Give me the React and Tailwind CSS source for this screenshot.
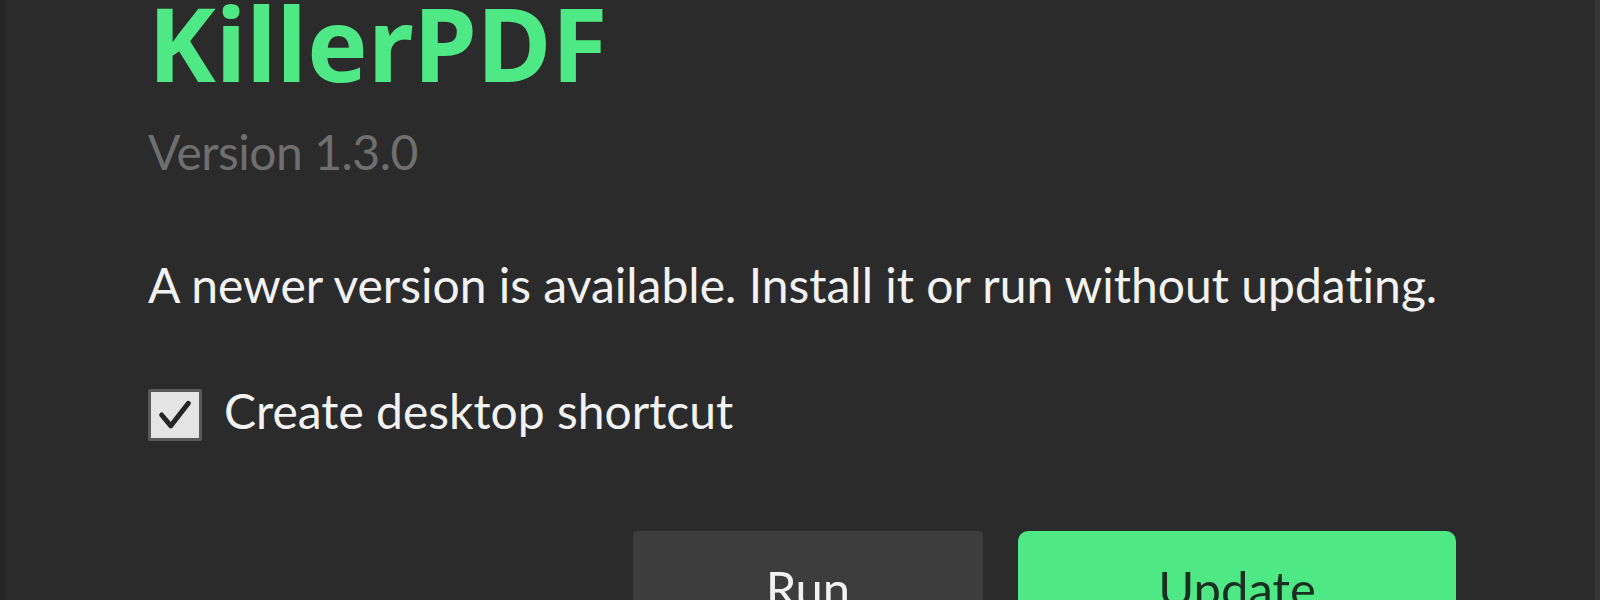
import React from 'react';

const font = { fontFamily: 'Lato, "Noto Sans", sans-serif' };
const titleFont = { fontFamily: '"Noto Sans", "Open Sans", sans-serif' };

const CheckBox = ({ checked }) => (
  <div className="w-[54px] h-[52px] shrink-0 flex items-center justify-center bg-[#e4e4e4] border-[3px] border-[#5a5a5a] rounded-[2px]">
    {checked && (
      <svg viewBox="0 0 24 24" className="w-[40px] h-[40px]" fill="none" stroke="#262626" strokeWidth="3" strokeLinecap="round" strokeLinejoin="round">
        <polyline points="4,12 9.5,18.5 20,5" />
      </svg>
    )}
  </div>
);

const App = () => {
  return (
    <div
      className="w-full h-[600px] overflow-hidden bg-[#2b2b2b] border-l-[5px] border-l-[#252525] border-r-[5px] border-r-[#363636] antialiased [font-variant-ligatures:none]"
      style={font}
    >
      <div className="pl-[143px] pr-[139px]">
        <h1 className="text-[102px] leading-[86px] h-[86px] font-bold text-[#4ee884] whitespace-nowrap" style={titleFont}>
          KillerPDF
        </h1>
        <div className="mt-[40px] text-[48px] leading-[52px] tracking-[-0.5px] text-[#6f6f6f] whitespace-nowrap">Version 1.3.0</div>
        <p className="mt-[82px] text-[48px] leading-[49px] text-[#f2f2f2] whitespace-nowrap">
          A newer version is available. Install it or run without updating.
        </p>
        <label className="mt-[80px] flex items-center gap-[22px]">
          <CheckBox checked />
          <span className="text-[48px] leading-[52px] -mt-[8px] text-[#f2f2f2] whitespace-nowrap">Create desktop shortcut</span>
        </label>
        <div className="mt-[90px] flex justify-end gap-[35px]">
          <button className="w-[350px] h-[116px] rounded-[4px] bg-[#3d3d3d] text-[49px] text-[#f2f2f2]">Run</button>
          <button className="w-[438px] h-[116px] rounded-[10px] bg-[#4ee884] text-[49px] text-[#1b2e22]">Update</button>
        </div>
      </div>
    </div>
  );
};

export default App;
